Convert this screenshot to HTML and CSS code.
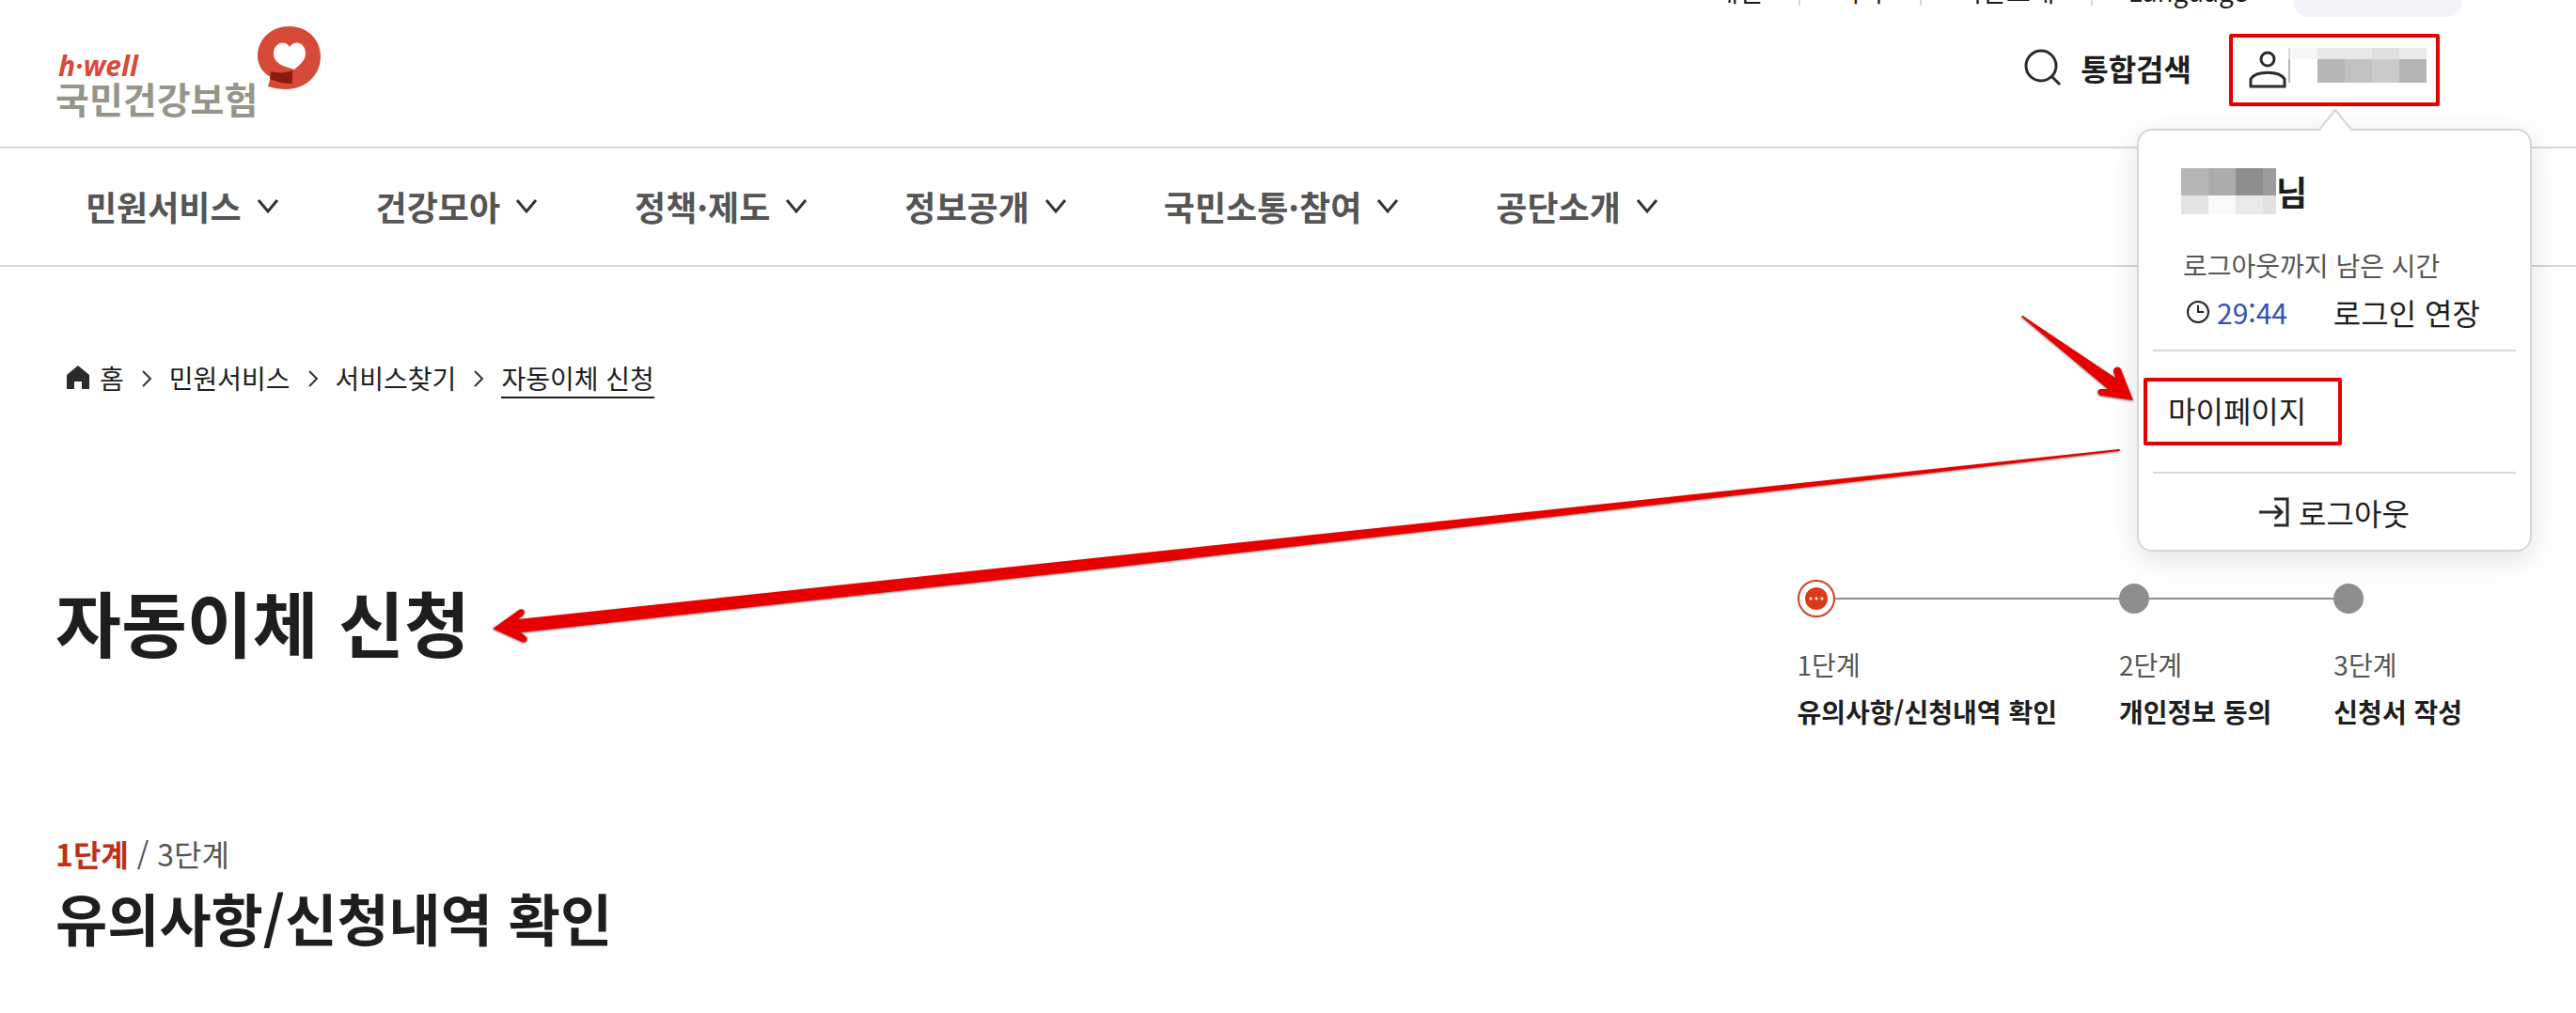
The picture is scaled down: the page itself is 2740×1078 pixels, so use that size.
FILE: index.html
```html
<!DOCTYPE html>
<html lang="ko">

<head>
  <meta charset="UTF-8">
  <meta name="viewport" content="width=device-width, initial-scale=1.0">
  <title>자동이체 신청 | 국민건강보험</title>
  <link rel="stylesheet" href="styles.css">
</head>

<body>
  <!-- icons used more than once -->
  <svg class="sprite" aria-hidden="true">
    <symbol id="chevron-down" viewBox="0 0 24 24">
      <path d="M2 6 L12 18 L22 6" fill="none" stroke="#333" stroke-width="3" />
    </symbol>
    <symbol id="chevron-right" viewBox="0 0 12 20">
      <path d="M2 2 L10 10 L2 18" fill="none" stroke="#333" stroke-width="2" />
    </symbol>
  </svg>

  <header>
    <div class="util">
      <ul class="util_list">
        <li><a href="#">개인</a></li>
        <li><a href="#">회사</a></li>
        <li><a href="#">기관소개</a></li>
        <li><a href="#">Language</a></li>
      </ul>
      <button type="button" class="util_button">화면크기</button>
    </div>

    <div class="head">
      <a href="#" class="logo" aria-label="h-well 국민건강보험">
        <span class="logo_text">
          <span class="logo_en">h·well</span>
          <span class="logo_ko">국민건강보험</span>
        </span>
        <svg class="logo_mark" viewBox="0 0 68 68">
          <path d="M34 0 C53 0 67 14 67 32 C67 52 51 67 30 67 C23 67 17 66 11 64 L14 54 C5 49 0 41 0 32 C0 13 15 0 34 0 Z" fill="#d64a37" />
          <path d="M39 46 C31 43 17 41 17 29 C17 17 30 14 34 22 C39 14 51 17 51 29 C51 36 45 41 39 46 Z" fill="#fff" />
          <path d="M14 48 C21 50 29 50 37 47 L37 61 C28 61 20 59 13 56 Z" fill="#8c1c0c" />
        </svg>
      </a>

      <div class="tools">
        <button type="button" class="search">
          <svg width="40" height="40" viewBox="0 0 40 40" fill="none" stroke="#2b2b2b" stroke-width="3">
            <circle cx="18" cy="18" r="16" />
            <path d="M29 29 L38 38" />
          </svg>
          통합검색
        </button>

        <div class="user">
          <button type="button" class="user_button" aria-label="사용자 메뉴">
            <svg width="40" height="40" viewBox="0 0 40 40" fill="none" stroke="#2b2b2b" stroke-width="3">
              <circle cx="20" cy="9" r="7" />
              <path d="M2 38 V30 C8 21 32 21 38 30 V38 Z" />
            </svg>
            <svg class="user_name" width="148" height="37" viewBox="0 0 148 37" shape-rendering="crispEdges">
              <path d="M0 0 h2 v12 h-2 z" fill="#d9d9d9" />
              <path d="M0 12 h2 v25 h-2 z" fill="#b5b5b5" />
              <path d="M2 0 h29 v12 h-29 z" fill="#f6f6f6" />
              <path d="M31 0 h58 v12 h-58 z" fill="#e8e8e8" />
              <path d="M89 0 h29 v12 h-29 z" fill="#dfdfdf" />
              <path d="M118 0 h29 v12 h-29 z" fill="#ebebeb" />
              <path d="M31 12 h29 v25 h-29 z" fill="#b6b6b6" />
              <path d="M60 12 h29 v25 h-29 z" fill="#c1c1c1" />
              <path d="M89 12 h29 v25 h-29 z" fill="#cbcbcb" />
              <path d="M118 12 h29 v25 h-29 z" fill="#b3b3b3" />
            </svg>
          </button>

          <div class="menu">
            <svg class="menu_caret" width="40" height="24" viewBox="0 0 40 24">
              <path d="M2 24 L20 2 L38 24" fill="#fff" stroke="#d6d6d6" stroke-width="2" />
            </svg>
            <div class="menu_info">
              <p class="menu_name">
                <svg width="101" height="49" viewBox="0 0 101 49" shape-rendering="crispEdges">
                  <path d="M0 0 h29 v29 h-29 z" fill="#b5b5b5" />
                  <path d="M29 0 h29 v29 h-29 z" fill="#acacac" />
                  <path d="M58 0 h29 v29 h-29 z" fill="#8e8e8e" />
                  <path d="M87 0 h14 v29 h-14 z" fill="#9c9c9c" />
                  <path d="M0 29 h29 v20 h-29 z" fill="#e3e3e3" />
                  <path d="M29 29 h29 v20 h-29 z" fill="#f9f9f9" />
                  <path d="M58 29 h29 v20 h-29 z" fill="#e9e9e9" />
                  <path d="M87 29 h14 v20 h-14 z" fill="#e2e2e2" />
                </svg>
                <b>님</b>
              </p>
              <p class="menu_label">로그아웃까지 남은 시간</p>
              <div class="menu_time">
                <svg width="24" height="24" viewBox="0 0 24 24" fill="none" stroke="#222" stroke-width="2">
                  <circle cx="12" cy="12" r="11" />
                  <path d="M12 5 V12 H18" />
                </svg>
                <time>29:44</time>
                <button type="button">로그인 연장</button>
              </div>
            </div>
            <div class="menu_links">
              <a href="#" class="marked">마이페이지</a>
            </div>
            <button type="button" class="logout">
              <svg width="32" height="32" viewBox="0 0 32 32" fill="none" stroke="#2b2b2b" stroke-width="3">
                <path d="M16 2 H30 V30 H16" />
                <path d="M0 16 H24 M17 9 L24 16 L17 23" />
              </svg>
              로그아웃
            </button>
          </div>
        </div>
      </div>
    </div>

    <nav class="gnb">
      <ul>
        <li><a href="#">민원서비스 <svg><use href="#chevron-down" /></svg></a></li>
        <li><a href="#">건강모아 <svg><use href="#chevron-down" /></svg></a></li>
        <li><a href="#">정책·제도 <svg><use href="#chevron-down" /></svg></a></li>
        <li><a href="#">정보공개 <svg><use href="#chevron-down" /></svg></a></li>
        <li><a href="#">국민소통·참여 <svg><use href="#chevron-down" /></svg></a></li>
        <li><a href="#">공단소개 <svg><use href="#chevron-down" /></svg></a></li>
      </ul>
    </nav>
  </header>

  <main>
    <nav class="breadcrumb">
      <a href="#" class="home">
        <svg width="24" height="26" viewBox="0 0 24 26">
          <path d="M12 0 L24 10 V25 H16 V17 H8 V25 H0 V10 Z" fill="#2b2b2b" />
        </svg>
        홈
      </a>
      <svg class="sep"><use href="#chevron-right" /></svg>
      <a href="#">민원서비스</a>
      <svg class="sep"><use href="#chevron-right" /></svg>
      <a href="#">서비스찾기</a>
      <svg class="sep"><use href="#chevron-right" /></svg>
      <a href="#" class="current">자동이체 신청</a>
    </nav>

    <div class="title_row">
      <h1>자동이체 신청</h1>
      <ol class="steps">
        <li class="active">
          <div class="marker">
            <svg width="40" height="40" viewBox="0 0 40 40">
              <circle cx="20" cy="20" r="19" fill="#fff" stroke="#d0402a" stroke-width="2" />
              <circle cx="20" cy="20" r="12" fill="#dd3a1b" />
              <g fill="#fff">
                <circle cx="14" cy="20" r="1.5" />
                <circle cx="20" cy="20" r="1.5" />
                <circle cx="26" cy="20" r="1.5" />
              </g>
            </svg>
          </div>
          <span>1단계</span>
          <strong>유의사항/신청내역 확인</strong>
        </li>
        <li>
          <div class="marker"><i></i></div>
          <span>2단계</span>
          <strong>개인정보 동의</strong>
        </li>
        <li>
          <div class="marker"><i></i></div>
          <span>3단계</span>
          <strong>신청서 작성</strong>
        </li>
      </ol>
    </div>

    <p class="step_count"><b>1단계</b> / 3단계</p>
    <h2>유의사항/신청내역 확인</h2>
  </main>

  <!-- guide arrows drawn over the page -->
  <svg class="arrows" viewBox="0 0 2740 1078" aria-hidden="true">
    <path d="M2150 337 Q2151 335 2153 337 L2250 402 L2248 395 C2248 390 2254 389 2256 393 L2269 426 L2235 421 C2230 420 2230 414 2235 414 L2242 414 Z" />
    <path d="M524 669 L552 649 C557 646 560 652 556 655 L551 659 L1200 590 L2254 478 Q2256 479 2254 480 L1200 602 L554 673 L559 677 C563 680 559 685 555 683 Z" />
  </svg>
</body>

</html>
```

FILE: styles.css
```css
* {
  box-sizing: border-box;
  margin: 0;
  padding: 0;
}

body {
  position: relative;
  background-color: #fff;
  color: #1e1e1e;
  font-family: "Noto Sans CJK KR", "Noto Sans", sans-serif;
  font-size: 28px;
  line-height: 40px;
}

a {
  color: inherit;
  text-decoration: none;
}

ul,
ol {
  list-style: none;
}

button {
  border: none;
  background: none;
  color: inherit;
  font: inherit;
  cursor: pointer;
}

svg {
  display: block;
  flex-shrink: 0;
}

.sprite {
  position: absolute;
  width: 0;
  height: 0;
}

/* top utility bar */
.util {
  display: flex;
  justify-content: flex-end;
  align-items: flex-end;
  height: 18px;
  padding-right: 121px;
  overflow: hidden;
}

.util_list {
  display: flex;
  margin-right: 48px;
  padding-bottom: 12px;
}

.util_list li {
  padding: 0 38px;
  height: 28px;
  line-height: 24px;
  border-left: 2px solid #d6d6d6;
}

.util_list li:first-child {
  border-left: none;
}

.util_list li:last-child {
  padding-right: 0;
}

.util_button {
  width: 180px;
  height: 56px;
  padding-bottom: 14px;
  border-radius: 16px;
  background-color: #f3f4fa;
  color: #555;
}

/* logo and tools */
.head {
  display: flex;
  justify-content: space-between;
  align-items: flex-start;
  height: 140px;
  padding: 10px 121px 0 59px;
  border-bottom: 2px solid #d6d6d6;
}

.logo {
  display: flex;
}

.logo_text {
  display: flex;
  flex-direction: column;
  padding-top: 28px;
}

.logo_en {
  padding-left: 3px;
  color: #d64a37;
  font: italic 700 30px/28px "Open Sans", sans-serif;
}

.logo_ko {
  color: #96958a;
  font-size: 39px;
  font-weight: 700;
  line-height: 40px;
}

.logo_mark {
  width: 68px;
  height: 68px;
}

.tools {
  display: flex;
  gap: 40px;
  padding: 8px 24px 0 0;
}

.search {
  display: flex;
  align-items: center;
  gap: 20px;
  height: 72px;
  font-size: 32px;
  font-weight: 700;
}

.user {
  position: relative;
}

.user_button {
  display: flex;
  align-items: flex-start;
  gap: 2px;
  width: 224px;
  height: 77px;
  padding: 14px 0 0 17px;
  border: 4px solid #e80000;
  border-radius: 2px;
}

.user_name {
  margin-top: -3px;
}

/* user menu */
.menu {
  position: absolute;
  top: 101px;
  right: -98px;
  z-index: 1;
  width: 420px;
  padding: 0 15px;
  border: 2px solid #d6d6d6;
  border-radius: 16px;
  background-color: #fff;
  box-shadow: 0 8px 32px rgba(0, 0, 0, 0.12);
}

.menu_caret {
  position: absolute;
  top: -24px;
  left: 189px;
}

.menu_info {
  padding: 40px 30px 10px;
  border-bottom: 2px solid #d6d6d6;
}

.menu_name {
  display: flex;
  height: 49px;
  font-size: 36px;
  line-height: 48px;
}

.menu_label {
  margin-top: 34px;
  padding-left: 2px;
  color: #555;
}

.menu_time {
  display: flex;
  align-items: center;
  height: 60px;
  padding-left: 6px;
  font-size: 32px;
}

.menu_time time {
  margin: 0 auto 0 8px;
  color: #3452b4;
  font-size: 30px;
}

.menu_time button {
  margin-right: 8px;
}

.menu_links {
  padding: 28px 0;
  margin-left: -10px;
}

.marked {
  display: block;
  width: 211px;
  height: 72px;
  padding-left: 22px;
  border: 4px solid #e80000;
  border-radius: 2px;
  font-size: 32px;
  line-height: 60px;
}

.logout {
  display: flex;
  justify-content: center;
  align-items: center;
  gap: 10px;
  width: 100%;
  height: 83px;
  border-top: 2px solid #d6d6d6;
  font-size: 32px;
}

/* main navigation */
.gnb {
  padding: 0 91px;
  border-bottom: 2px solid #d6d6d6;
}

.gnb ul {
  display: flex;
  gap: 103px;
}

.gnb a {
  display: flex;
  align-items: center;
  gap: 16px;
  height: 124px;
  padding-bottom: 2px;
  color: #555;
  font-size: 36px;
  font-weight: 700;
}

.gnb svg {
  width: 24px;
  height: 24px;
}

main {
  padding: 98px 121px 58px 59px;
}

.breadcrumb {
  display: flex;
  align-items: center;
  gap: 18px;
  padding-left: 12px;
}

.breadcrumb a {
  border-bottom: 2px solid transparent;
}

.breadcrumb .home {
  display: flex;
  align-items: center;
  gap: 11px;
}

.breadcrumb .current {
  border-color: #1e1e1e;
}

.sep {
  width: 12px;
  height: 20px;
}

.title_row {
  display: flex;
  justify-content: space-between;
  align-items: flex-start;
  margin-top: 193px;
}

h1 {
  font-size: 76px;
  line-height: 88px;
}

/* progress steps */
.steps {
  display: flex;
}

.steps li {
  display: flex;
  flex-direction: column;
  padding-right: 66px;
}

.steps li:last-child {
  padding-right: 0;
}

.marker {
  display: flex;
  align-items: center;
  height: 40px;
  margin-right: -66px;
  margin-bottom: 30px;
}

.marker::after {
  content: "";
  flex: 1;
  height: 2px;
  background-color: #8e8e8e;
}

.steps li:last-child .marker::after {
  display: none;
}

.marker i {
  width: 32px;
  height: 32px;
  border-radius: 50%;
  background-color: #8e8e8e;
}

.steps span {
  margin-bottom: 10px;
  color: #555;
}

.step_count {
  margin-top: 107px;
  color: #555;
  font-size: 32px;
  line-height: 48px;
}

.step_count b {
  color: #bf3016;
}

h2 {
  font-size: 60px;
  line-height: 88px;
}

.arrows {
  position: absolute;
  top: 0;
  left: 0;
  z-index: 2;
  width: 100%;
  fill: #e80000;
  pointer-events: none;
  filter: drop-shadow(0 1px 1px rgba(0, 0, 0, 0.5));
}
```
